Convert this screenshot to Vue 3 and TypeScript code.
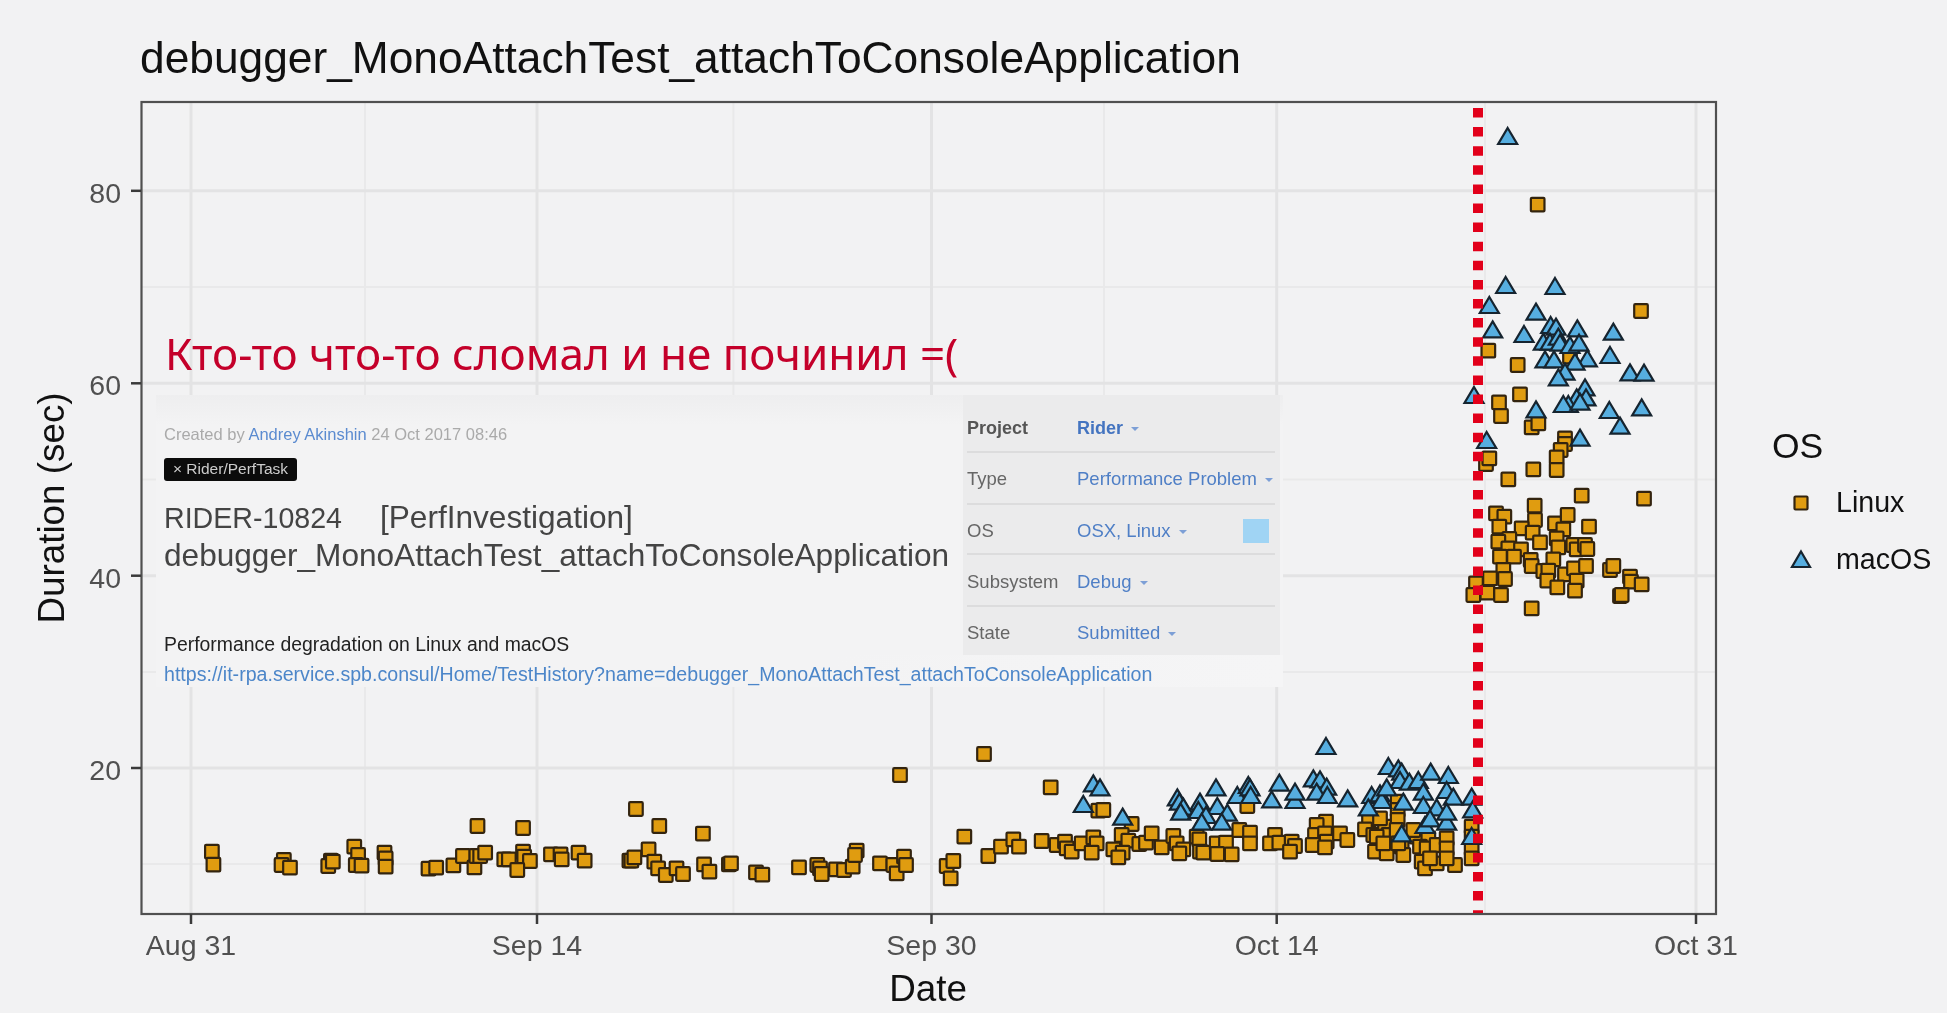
<script setup lang="ts">
type P = { x: number; y: number };
const map = (ox: number, oy: number, sx: number, sy: number, list: number[][]): P[] =>
  list.map(([a, b]) => ({ x: ox + a / sx, y: oy + b / sy }));

const squares: P[] = [
  ...map(130, 730, 2.613, 3, [[214,365],[218,404],[402,390],[396,405],[418,413],[525,392],[518,408],[530,395],[586,350],[596,375],[590,405],[605,407],[665,368],[668,385],[668,410],[780,416],[800,413],[845,406],[870,378],[900,412],[905,378],[915,378],[928,368],[908,288],[1027,294],[978,388],[990,388],[1027,365],[1030,380],[1045,393],[1012,420],[1100,373],[1125,373],[1128,388],[1172,368],[1188,392],[1322,237],[1383,288],[1497,311],[1355,358],[1305,392],[1310,392],[1318,382],[1370,395],[1380,415],[1400,435],[1428,415],[1445,432],[1500,403],[1514,425],[1565,403]]),
  ...map(700, 730, 3, 3, [[93,400],[168,427],[187,434],[297,412],[352,405],[360,415],[365,432],[408,418],[432,420],[458,410],[470,362],[465,375],[540,400],[580,405],[590,430],[612,380],[618,405],[600,135],[852,72],[1052,172],[793,320],[740,408],[760,393],[752,445],[865,378],[903,350],[940,328],[957,350],[1025,333],[1070,345],[1095,335],[1100,355],[1115,365],[1145,340],[1180,322],[1190,340],[1175,368],[1195,242]]),
  ...map(1100, 700, 3, 3, [[10,330],[95,372],[65,405],[85,422],[40,448],[68,458],[55,472],[118,432],[138,428],[155,400],[185,442],[220,408],[230,430],[250,448],[238,460],[290,410],[298,418],[300,455],[310,458],[350,430],[378,428],[352,462],[395,463],[418,390],[450,398],[450,430],[442,318]]),
  ...map(1270, 730, 3, 3, [[168,275],[140,285],[135,315],[165,310],[170,335],[128,345],[165,352],[210,310],[232,330],[15,315],[0,340],[28,338],[65,335],[75,348],[60,365],[297,268],[285,298],[310,315],[345,290],[355,315],[320,320],[315,365],[350,370],[340,340],[383,215],[383,240],[383,270],[380,300],[395,350],[400,375],[385,340],[440,320],[475,325],[450,350],[470,355],[500,345],[455,395],[465,415],[500,400],[480,385],[555,405],[530,325],[530,355],[530,385],[605,290],[605,320],[605,355],[605,385],[430,300],[330,265]]),
  ...map(1440, 100, 3, 3, [[293,314],[603,633],[145,752]]),
  ...map(1440, 340, 3, 3, [[233,75],[390,50],[240,163],[177,187],[183,228],[275,262],[295,250],[375,295],[375,312],[362,330],[350,352],[350,390],[280,388],[138,372],[148,355],[205,418],[425,467],[612,476],[284,497],[168,520],[193,530],[178,560],[285,540],[245,565],[278,578],[345,550],[383,525],[370,568],[447,560],[350,595],[300,607],[208,597],[175,605],[205,625],[243,628],[180,650],[222,650],[355,622],[400,615],[410,628],[435,615],[442,627],[340,658],[272,660],[275,678],[310,693],[325,692],[375,703],[402,685],[438,678],[322,722],[410,722],[352,742],[405,752],[510,690],[520,678],[570,710],[573,725],[605,733],[540,768],[545,765],[275,805],[190,690],[195,717],[150,715],[108,730],[100,765],[142,758],[183,765]]),
];

const triangles: P[] = [
  ...map(700, 730, 3, 3, [[1180,160],[1150,222]]),
  ...map(1100, 700, 3, 3, [[0,262],[68,350],[232,292],[238,305],[250,320],[242,335],[348,262],[352,318],[300,305],[295,330],[318,345],[305,365],[382,338],[365,365],[412,285],[445,255],[450,262],[452,285]]),
  ...map(1270, 730, 3, 3, [[168,48],[28,158],[75,210],[75,185],[5,208],[130,145],[150,148],[170,170],[140,185],[172,195],[233,205],[355,108],[385,115],[395,125],[390,150],[418,155],[305,195],[330,190],[335,210],[350,172],[295,232],[445,150],[482,125],[535,135],[460,185],[460,225],[400,215],[530,180],[550,200],[500,232],[465,285],[480,265],[530,275],[530,245],[395,310],[605,200],[608,238],[605,318]]),
  ...map(1440, 100, 3, 3, [[203,108],[197,555],[345,558]]),
  ...map(1480, 290, 3, 3, [[28,45],[38,118],[168,65],[132,132],[212,105],[228,110],[292,115],[400,125],[190,155],[210,155],[235,140],[240,158],[270,165],[297,158],[195,208],[222,208],[322,205],[390,195],[285,215],[255,245],[235,262],[450,247],[492,248],[315,292],[318,322],[290,322],[265,342],[250,342],[300,335],[168,358],[388,360],[485,352],[420,407],[300,443],[20,450]]),
  ...map(1440, 340, 3, 3, [[102,165]]),
];

const triPoints = (p: P) => `${p.x},${p.y - 8} ${p.x + 9.5},${p.y + 8} ${p.x - 9.5},${p.y + 8}`;

const majorH = [190.8, 383.3, 575.7, 768];
const minorH = [287, 479.5, 672, 864];
const yTicks = [
  { y: 190.8, label: "80" },
  { y: 383.3, label: "60" },
  { y: 575.7, label: "40" },
  { y: 768, label: "20" },
];
const xTicks = [
  { x: 191, label: "Aug 31" },
  { x: 537, label: "Sep 14" },
  { x: 931.5, label: "Sep 30" },
  { x: 1276.7, label: "Oct 14" },
  { x: 1696, label: "Oct 31" },
];
const minorV = [365, 733.4, 1104, 1485];

const fields = [
  { key: "Project", value: "Rider", strong: true, swatch: false },
  { key: "Type", value: "Performance Problem", strong: false, swatch: false },
  { key: "OS", value: "OSX, Linux", strong: false, swatch: true },
  { key: "Subsystem", value: "Debug", strong: false, swatch: false },
  { key: "State", value: "Submitted", strong: false, swatch: false },
];
</script>

<template>
  <div class="page">
    <h1 class="title">debugger_MonoAttachTest_attachToConsoleApplication</h1>
    <div class="chart-row">
      <div class="figure">
        <svg class="plot" width="1740" height="923" viewBox="0 90 1740 923">
          <rect x="141.5" y="102" width="1574.5" height="812" fill="#f2f2f3" />
          <line v-for="y in minorH" :key="'mh' + y" x1="142" x2="1716" :y1="y" :y2="y" class="grid-minor" />
          <line v-for="x in minorV" :key="'mv' + x" :x1="x" :x2="x" y1="102" y2="914" class="grid-minor" />
          <line v-for="y in majorH" :key="'h' + y" x1="142" x2="1716" :y1="y" :y2="y" class="grid-major" />
          <line v-for="t in xTicks" :key="'v' + t.x" :x1="t.x" :x2="t.x" y1="102" y2="914" class="grid-major" />

          <rect
            v-for="(p, i) in squares"
            :key="'s' + i"
            :x="p.x - 6.8"
            :y="p.y - 6.8"
            width="13.6"
            height="13.6"
            rx="1"
            class="square"
          />
          <polygon v-for="(p, i) in triangles" :key="'t' + i" :points="triPoints(p)" class="triangle" />

          <line x1="1478" x2="1478" y1="108" y2="914" class="marker-line" />
          <rect x="141.5" y="102" width="1574.5" height="812" class="panel-border" />

          <g v-for="t in yTicks" :key="'yt' + t.y">
            <line x1="131" x2="141" :y1="t.y" :y2="t.y" class="tick" />
            <text x="121" :y="t.y + 12" text-anchor="end" class="axis-text">{{ t.label }}</text>
          </g>
          <g v-for="t in xTicks" :key="'xt' + t.x">
            <line :x1="t.x" :x2="t.x" y1="914" y2="924" class="tick" />
            <text :x="t.x" y="955" text-anchor="middle" class="axis-text">{{ t.label }}</text>
          </g>
          <text x="928" y="1001" text-anchor="middle" class="axis-title">Date</text>
          <text x="64" y="508" text-anchor="middle" transform="rotate(-90 64 508)" class="axis-title">Duration (sec)</text>
        </svg>

        <p class="annotation">Кто-то что-то сломал и не починил =(</p>

        <div class="issue">
          <div class="issue-main">
            <div class="created">
              Created by <a class="author">Andrey Akinshin</a> 24 Oct 2017 08:46
            </div>
            <span class="tag">× Rider/PerfTask</span>
            <h2 class="issue-title">
              <span class="issue-id">RIDER-10824</span><span class="issue-tagline">[PerfInvestigation]</span><br />debugger_MonoAttachTest_attachToConsoleApplication
            </h2>
            <p class="issue-desc">Performance degradation on Linux and macOS</p>
          </div>
          <div class="fields">
            <div v-for="f in fields" :key="f.key" class="field">
              <span class="field-key" :class="{ strong: f.strong }">{{ f.key }}</span>
              <span class="field-value" :class="{ strong: f.strong }">
                {{ f.value }}<i class="caret"></i>
                <b v-if="f.swatch" class="swatch"></b>
              </span>
            </div>
          </div>
          <a class="issue-link">https://it-rpa.service.spb.consul/Home/TestHistory?name=debugger_MonoAttachTest_attachToConsoleApplication</a>
        </div>
      </div>

      <aside class="legend">
        <div class="legend-title">OS</div>
        <div class="legend-item">
          <svg width="24" height="24" viewBox="0 0 24 24"><rect x="5.5" y="5.5" width="13" height="13" rx="1" class="square" /></svg>
          <span>Linux</span>
        </div>
        <div class="legend-item">
          <svg width="24" height="24" viewBox="0 0 24 24"><polygon points="12,3.5 21,19 3,19" class="triangle" /></svg>
          <span>macOS</span>
        </div>
      </aside>
    </div>
  </div>
</template>

<style scoped>
.page {
  width: 1947px;
  height: 1013px;
  overflow: hidden;
  background: #f2f2f3;
  font-family: "Liberation Sans", Arial, sans-serif;
  color: #111;
  filter: blur(0.5px);
}
.title {
  margin: 0;
  height: 90px;
  padding: 33px 0 0 140px;
  box-sizing: border-box;
  font-size: 44.3px;
  line-height: 50px;
  font-weight: 400;
  color: #111;
  white-space: nowrap;
}
.chart-row {
  display: flex;
}
.figure {
  position: relative;
  width: 1740px;
  height: 923px;
  flex: none;
}
.plot {
  display: block;
}
.grid-major {
  stroke: #e3e3e4;
  stroke-width: 3;
}
.grid-minor {
  stroke: #e9e9ea;
  stroke-width: 2;
}
.square {
  fill: #e09c10;
  stroke: #33240f;
  stroke-width: 2.2;
}
.triangle {
  fill: #56aee0;
  stroke: #16242f;
  stroke-width: 2.2;
  stroke-linejoin: miter;
}
.marker-line {
  stroke: #e2001a;
  stroke-width: 10;
  stroke-dasharray: 9.5 9.6;
}
.panel-border {
  fill: none;
  stroke: #505050;
  stroke-width: 2.2;
}
.tick {
  stroke: #3a3a3a;
  stroke-width: 2.5;
}
.axis-text {
  font-size: 28.5px;
  fill: #505050;
}
.axis-title {
  font-size: 36.8px;
  fill: #111;
}
.annotation {
  position: absolute;
  left: 165px;
  top: 233px;
  margin: 0;
  font-family: "Noto Sans", sans-serif;
  font-size: 44px;
  line-height: 60px;
  color: #c4002a;
  white-space: nowrap;
}
.issue {
  position: absolute;
  left: 156px;
  top: 305px;
  width: 1127px;
  height: 292px;
  display: grid;
  grid-template-columns: 807px 1fr;
  grid-template-rows: 260px 32px;
  background: linear-gradient(#eeeeef, #f3f3f4 30px);
}
.issue-main {
  padding: 29px 0 0 8px;
}
.created {
  font-size: 16.5px;
  line-height: 20px;
  color: #aaa;
}
.author {
  color: #5b8bd0;
}
.tag {
  display: inline-block;
  margin-top: 14px;
  padding: 0 9px;
  height: 22.5px;
  line-height: 22px;
  font-size: 15.5px;
  color: #ccc;
  background: #0b0b0b;
  border-radius: 3px;
  vertical-align: top;
}
.issue-title {
  margin: 18px 0 0;
  font-size: 31.6px;
  line-height: 37px;
  font-weight: 400;
  color: #444;
  white-space: nowrap;
}
.issue-id {
  font-size: 28.6px;
}
.issue-tagline {
  margin-left: 38px;
}
.issue-desc {
  margin: 58px 0 0;
  font-size: 19.4px;
  line-height: 24px;
  color: #222;
  white-space: nowrap;
}
.fields {
  padding: 6px 8px 0 4px;
  background: #ebebec;
  box-sizing: border-box;
  width: 317px;
}
.field {
  display: grid;
  grid-template-columns: 110px 1fr;
  align-items: start;
  height: 52px;
  box-sizing: border-box;
  padding-top: 14px;
  font-size: 18.5px;
  line-height: 24px;
  border-bottom: 2px solid #dcdcdd;
  width: 308px;
}
.field:first-child {
  padding-top: 15px;
}
.field:nth-child(3) {
  height: 50px;
}
.field:nth-child(4) {
  padding-top: 15px;
}
.field:last-child {
  border-bottom: 0;
}
.field-key {
  color: #666;
}
.field-key.strong {
  font-weight: 700;
  font-size: 18px;
  color: #555;
}
.field-value {
  display: flex;
  align-items: center;
  height: 24px;
  color: #4f7fc6;
  white-space: nowrap;
}
.field-value.strong {
  font-weight: 700;
  font-size: 18px;
  color: #4474c0;
}
.caret {
  width: 0;
  height: 0;
  margin: 2px 0 0 8px;
  border-left: 4px solid transparent;
  border-right: 4px solid transparent;
  border-top: 4px solid #7d9fd6;
}
.swatch {
  width: 26px;
  height: 24px;
  margin-left: auto;
  margin-right: 6px;
  background: #a0d4f4;
}
.issue-link {
  grid-column: 1 / -1;
  padding: 7px 0 0 8px;
  font-size: 19.6px;
  line-height: 24px;
  color: #4c86c9;
  white-space: nowrap;
  background: linear-gradient(90deg, #f3f3f4 60%, #f5f5f6);
}
.legend {
  padding-top: 331px;
  width: 207px;
  box-sizing: border-box;
}
.legend-title {
  margin: 0 0 3px 32px;
  font-size: 35.5px;
  line-height: 50px;
  color: #111;
}
.legend-item {
  display: flex;
  align-items: center;
  height: 57px;
  margin-left: 49px;
  font-size: 28.6px;
  color: #111;
}
.legend-item span {
  margin-left: 23px;
}
</style>

<style>
body {
  background: #f2f2f3;
}
</style>
